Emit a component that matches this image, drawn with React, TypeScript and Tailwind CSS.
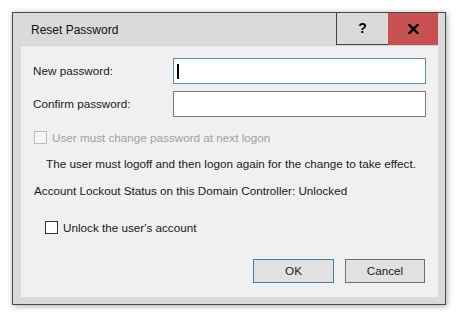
import React from "react";

export default function App() {
  const font = { fontFamily: '"Liberation Sans", Arial, sans-serif' };
  return (
    <div className="w-[459px] h-[317px] bg-white pt-[12px] pl-[12px]" style={font}>
      <div className="w-[434px] h-[293px] border border-[#4a4a4a] bg-[#dadada] shadow-[1px_1px_6px_rgba(0,0,0,0.35)] flex flex-col">
        {/* title bar */}
        <div className="h-[32px] flex items-stretch pl-[8px] pr-[7px]">
          <div className="flex-1 flex items-center pl-[10px] pt-[1px] text-[12px] text-[#111]">Reset Password</div>
          <div className="w-[52px] border-l border-b border-[#444] flex items-center justify-center text-[14px] font-bold text-black">?</div>
          <div className="w-[50px] bg-[#c75050] border-b border-[#c75050] flex items-center justify-center">
            <svg width="11" height="10" viewBox="0 0 11 10">
              <path d="M1.5 1 L9.5 9 M9.5 1 L1.5 9" stroke="#000" strokeWidth="2.4" strokeLinecap="square" />
            </svg>
          </div>
        </div>
        {/* content */}
        <div className="mx-[8px] mr-[7px] h-[252px] bg-[#f0f0f0] border-t border-[#cdd5dd] text-[11.7px] text-[#1a1a1a] flex flex-col">
          <div className="mt-[12px] flex items-center pl-[12px] pr-[12px]">
            <span className="w-[140px]">New password:</span>
            <div className="flex-1 h-[26px] bg-white border border-[#5f8ab5] flex items-center pl-[3px]">
              <div className="w-[1.5px] h-[15px] bg-black" />
            </div>
          </div>
          <div className="mt-[7px] flex items-center pl-[12px] pr-[12px]">
            <span className="w-[140px]">Confirm password:</span>
            <div className="flex-1 h-[26px] bg-white border border-[#7a7a7a]" />
          </div>
          <div className="mt-[14px] flex items-center pl-[13px] h-[13px]">
            <div className="w-[13px] h-[13px] border border-[#bcbcbc] bg-[#f6f6f6]" />
            <span className="ml-[5px] text-[#a0a0a0]">User must change password at next logon</span>
          </div>
          <div className="mt-[13px] pl-[25px] h-[14px] leading-[14px]">The user must logoff and then logon again for the change to take effect.</div>
          <div className="mt-[13px] pl-[13px] h-[14px] leading-[14px]">Account Lockout Status on this Domain Controller: Unlocked</div>
          <div className="mt-[23px] flex items-center pl-[24px] h-[13px]">
            <div className="w-[13px] h-[13px] border border-[#333] bg-white" />
            <span className="ml-[5px]">Unlock the user's account</span>
          </div>
          <div className="mt-[25px] flex justify-end pr-[13px] gap-[11px]">
            <div className="w-[81px] h-[24px] bg-[#e1e1e1] border border-[#3c7fb1] flex items-center justify-center">OK</div>
            <div className="w-[80px] h-[24px] bg-[#e1e1e1] border border-[#707070] flex items-center justify-center">Cancel</div>
          </div>
        </div>
      </div>
    </div>
  );
}
